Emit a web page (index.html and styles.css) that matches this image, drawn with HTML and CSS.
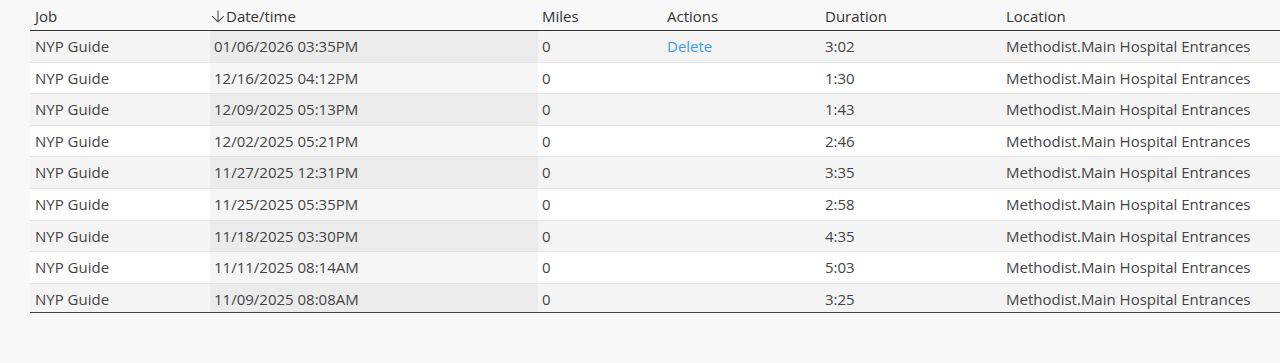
FILE: index.html
```html
<!DOCTYPE html>
<html lang="en">
<head>
<meta charset="utf-8">
<title>Time entries</title>
<link rel="stylesheet" href="styles.css">
</head>
<body>
<div class="page">
  <div class="grid" role="table">
    <div class="row head" role="row">
      <div class="cell" role="columnheader">Job</div>
      <div class="cell sorted-head" role="columnheader"><svg class="sort" width="14" height="13" viewBox="0 0 14 13"><path d="M7 0.5V12M1.2 6.2L7 12L12.8 6.2" fill="none" stroke="#555" stroke-width="1.1"/></svg>Date/time</div>
      <div class="cell" role="columnheader">Miles</div>
      <div class="cell" role="columnheader">Actions</div>
      <div class="cell" role="columnheader">Duration</div>
      <div class="cell" role="columnheader">Location</div>
    </div>
    <div class="row odd" role="row">
      <div class="cell">NYP Guide</div><div class="cell sorted">01/06/2026 03:35PM</div><div class="cell">0</div><div class="cell"><a class="action" href="#">Delete</a></div><div class="cell">3:02</div><div class="cell">Methodist.Main Hospital Entrances</div>
    </div>
    <div class="row even" role="row">
      <div class="cell">NYP Guide</div><div class="cell sorted">12/16/2025 04:12PM</div><div class="cell">0</div><div class="cell"></div><div class="cell">1:30</div><div class="cell">Methodist.Main Hospital Entrances</div>
    </div>
    <div class="row odd" role="row">
      <div class="cell">NYP Guide</div><div class="cell sorted">12/09/2025 05:13PM</div><div class="cell">0</div><div class="cell"></div><div class="cell">1:43</div><div class="cell">Methodist.Main Hospital Entrances</div>
    </div>
    <div class="row even" role="row">
      <div class="cell">NYP Guide</div><div class="cell sorted">12/02/2025 05:21PM</div><div class="cell">0</div><div class="cell"></div><div class="cell">2:46</div><div class="cell">Methodist.Main Hospital Entrances</div>
    </div>
    <div class="row odd" role="row">
      <div class="cell">NYP Guide</div><div class="cell sorted">11/27/2025 12:31PM</div><div class="cell">0</div><div class="cell"></div><div class="cell">3:35</div><div class="cell">Methodist.Main Hospital Entrances</div>
    </div>
    <div class="row even" role="row">
      <div class="cell">NYP Guide</div><div class="cell sorted">11/25/2025 05:35PM</div><div class="cell">0</div><div class="cell"></div><div class="cell">2:58</div><div class="cell">Methodist.Main Hospital Entrances</div>
    </div>
    <div class="row odd" role="row">
      <div class="cell">NYP Guide</div><div class="cell sorted">11/18/2025 03:30PM</div><div class="cell">0</div><div class="cell"></div><div class="cell">4:35</div><div class="cell">Methodist.Main Hospital Entrances</div>
    </div>
    <div class="row even" role="row">
      <div class="cell">NYP Guide</div><div class="cell sorted">11/11/2025 08:14AM</div><div class="cell">0</div><div class="cell"></div><div class="cell">5:03</div><div class="cell">Methodist.Main Hospital Entrances</div>
    </div>
    <div class="row odd last" role="row">
      <div class="cell">NYP Guide</div><div class="cell sorted">11/09/2025 08:08AM</div><div class="cell">0</div><div class="cell"></div><div class="cell">3:25</div><div class="cell">Methodist.Main Hospital Entrances</div>
    </div>
  </div>
</div>
</body>
</html>
```
FILE: styles.css
```css
html, body {
  margin: 0;
  padding: 0;
  background: #f8f8f8;
  overflow: hidden;
}
body {
  font-family: "Open Sans", "Noto Sans", sans-serif;
  font-size: 15px;
  color: #444;
}
.page {
  padding-left: 30px;
}
.grid {
  display: flex;
  flex-direction: column;
}
.row {
  display: grid;
  grid-template-columns: 180px 328px 125px 158px 181px 1fr;
  box-sizing: border-box;
  height: 31.6px;
  border-bottom: 1px solid #e4e4e4;
}
.row.head {
  height: 31px;
  border-bottom: 1px solid #333;
  color: #333;
}
.row.last {
  height: 29px;
  border-bottom: 1px solid #444;
}
.cell {
  padding: 5px 4px 0 4px;
  line-height: 20px;
  white-space: nowrap;
  overflow: hidden;
}
.row .cell:first-child {
  padding-left: 5px;
}
.head .cell {
  padding-top: 5.5px;
}
.sorted-head {
  display: flex;
  align-items: flex-start;
  padding-left: 1px !important;
}
.sort {
  margin-top: 4px;
  margin-right: 1px;
  flex: none;
}
.odd {
  background: #f4f4f4;
}
.even {
  background: #ffffff;
}
.odd .sorted {
  background: #ebebeb;
}
.even .sorted {
  background: #f5f5f5;
}
.action {
  color: #3d9be0;
  text-decoration: none;
}
```
